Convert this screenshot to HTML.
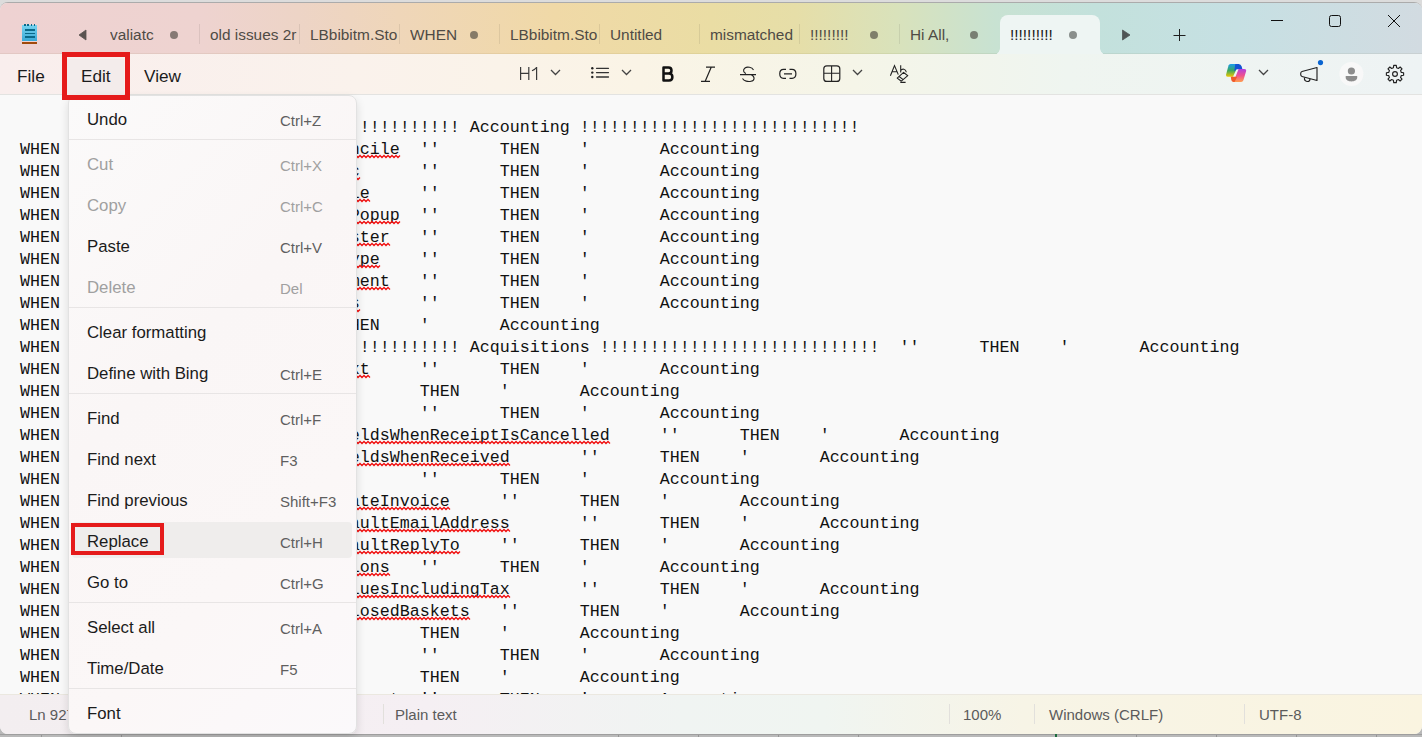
<!DOCTYPE html>
<html><head><meta charset="utf-8">
<style>
*{margin:0;padding:0;box-sizing:border-box}
html,body{width:1422px;height:737px;overflow:hidden;background:#c8c8c8;font-family:"Liberation Sans",sans-serif}
.a{position:absolute}
#desk{position:absolute;left:0;top:0;width:1422px;height:737px;background:#dcdcdc}
#win{position:absolute;left:0;top:3px;width:1422px;height:731px;border-radius:7px 7px 8px 8px;overflow:hidden;background:#f9f9f9}
#tabs{position:absolute;left:0;top:0;width:1422px;height:51px;box-shadow:inset 0 -1px 0 rgba(90,70,20,0.07);
 background:linear-gradient(90deg,#eed2d2 0%,#eed3d0 14%,#edd4c6 21%,#efd6b9 28%,#f0d9a7 39%,#eadda4 50%,#e6dea8 56%,#d9e2bb 63%,#c8e2d2 70%,#c3e1dc 77%,#c6e0e3 87%,#d2dbe1 100%)}
#menubar{position:absolute;left:0;top:51px;width:1422px;height:41px;
 background:linear-gradient(90deg,#f9eeed 0%,#faf2ec 25%,#faf4e6 45%,#f5f5e8 60%,#eff5f0 75%,#eef3f4 100%);border-bottom:1px solid #e3e3e1}
#status{position:absolute;left:0;top:691px;width:1422px;height:40px;
 background:linear-gradient(90deg,#f3eef0 0%,#f5eff3 30%,#f0f4f2 48%,#f0f5f1 58%,#f7f4e6 72%,#faf4e0 100%);border-top:1px solid #ebe8e0}
.tt{position:absolute;top:23px;font-size:15.4px;color:#4f4b45;white-space:nowrap;line-height:18px;overflow:hidden}
.sep{position:absolute;top:21px;width:1px;height:20px;background:rgba(0,0,0,0.08)}
.dot{position:absolute;top:28px;width:8px;height:8px;border-radius:50%;background:rgba(70,66,60,0.62)}
.mb{position:absolute;top:12px;font-size:17.2px;color:#1b1b1b;line-height:20px}
pre{position:absolute;left:20px;top:22px;font-family:"Liberation Mono",monospace;font-size:16.67px;line-height:22px;color:#111}
#menu{position:absolute;left:68px;top:95px;width:289px;height:639px;border-radius:8px;background:linear-gradient(135deg,#fbfafa 0%,#faf6f6 40%,#fbf7f7 70%,#fbf9fb 100%);border:1px solid #e2e2e2;box-shadow:0 4px 10px rgba(0,0,0,0.12)}
.mi{position:absolute;left:18px;font-size:16.8px;color:#1b1b1b;line-height:20px;white-space:nowrap}
.sc{position:absolute;left:211px;font-size:15px;color:#5f5f5f;line-height:18px;white-space:nowrap}
.dis{color:#a0a0a0}
.msep{position:absolute;left:0;width:287px;height:1px;background:#e8e5e5}
.st{position:absolute;top:11px;font-size:15px;color:#5b5b5b;line-height:18px;white-space:nowrap}
.ssep{position:absolute;top:9px;width:1px;height:20px;background:#e2e0dc}
</style></head><body>
<div id="desk"></div>
<div class="a" style="left:0;top:725px;width:1422px;height:12px;background:#b9b9b9;border-top:9px solid #b9b9b9"></div><div class="a" style="left:0;top:734px;width:1422px;height:1px;background:#9e9e9e"></div>
<div class="a" style="left:41px;top:735px;width:1px;height:2px;background:#969696"></div><div class="a" style="left:121px;top:735px;width:1px;height:2px;background:#969696"></div><div class="a" style="left:618px;top:735px;width:1px;height:2px;background:#969696"></div><div class="a" style="left:698px;top:735px;width:1px;height:2px;background:#969696"></div><div class="a" style="left:778px;top:735px;width:1px;height:2px;background:#969696"></div><div class="a" style="left:858px;top:735px;width:1px;height:2px;background:#969696"></div><div class="a" style="left:1136px;top:735px;width:1px;height:2px;background:#969696"></div><div class="a" style="left:1216px;top:735px;width:1px;height:2px;background:#969696"></div><div class="a" style="left:1296px;top:735px;width:1px;height:2px;background:#969696"></div><div class="a" style="left:1376px;top:735px;width:1px;height:2px;background:#969696"></div><div class="a" style="left:1055px;top:734px;width:2px;height:3px;background:#1b6b3d"></div>
<div class="a" style="left:0;top:2px;width:1422px;height:20px;border-radius:8px 8px 0 0;background:#ababab"></div>
<div id="win">
 <div id="tabs">
  <div class="tt" style="left:110px;width:52px">valiatc</div><div class="dot" style="left:170px"></div><div class="tt" style="left:210px;width:88px">old issues 2r</div><div class="tt" style="left:310px;width:88px">LBbibitm.Sto</div><div class="tt" style="left:410px;width:52px">WHEN</div><div class="dot" style="left:470px"></div><div class="tt" style="left:510px;width:88px">LBbibitm.Sto</div><div class="tt" style="left:610px;width:88px">Untitled</div><div class="tt" style="left:710px;width:88px">mismatched</div><div class="tt" style="left:810px;width:52px">!!!!!!!!!</div><div class="dot" style="left:870px"></div><div class="tt" style="left:910px;width:52px">Hi All,</div><div class="dot" style="left:970px"></div><div class="sep" style="left:199px"></div><div class="sep" style="left:299px"></div><div class="sep" style="left:399px"></div><div class="sep" style="left:499px"></div><div class="sep" style="left:599px"></div><div class="sep" style="left:699px"></div><div class="sep" style="left:799px"></div><div class="sep" style="left:899px"></div>
  <div class="a" style="left:1000px;top:12px;width:100px;height:40px;background:#eef5f3;border-radius:8px 8px 0 0"></div>
  <div class="a" style="left:993px;top:45px;width:7px;height:7px;background:radial-gradient(circle at 0 0,transparent 6.5px,#eef5f3 7.2px)"></div>
  <div class="a" style="left:1100px;top:45px;width:7px;height:7px;background:radial-gradient(circle at 100% 0,transparent 6.5px,#eef5f3 7.2px)"></div>
  <div class="tt" style="left:1010px;color:#1a1a1a;width:50px">!!!!!!!!!!</div>
  <div class="dot" style="left:1069px;background:#8a8f8c"></div>
 </div>
 <div id="menubar">
  <div class="mb" style="left:17px">File</div>
  <div class="a" style="left:67px;top:5px;width:57px;height:37px;background:#f3eceb"></div>
  <div class="mb" style="left:81px">Edit</div>
  <div class="mb" style="left:144px">View</div>
 </div>
 <div id="status">
  <div class="st" style="left:29px">Ln 927, Col 1</div>
  <div class="ssep" style="left:383px"></div>
  <div class="st" style="left:395px">Plain text</div>
  <div class="ssep" style="left:949px"></div>
  <div class="st" style="left:963px">100%</div>
  <div class="ssep" style="left:1034px"></div>
  <div class="st" style="left:1049px">Windows (CRLF)</div>
  <div class="ssep" style="left:1244px"></div>
  <div class="st" style="left:1259px">UTF-8</div>
 </div>
</div>
<div class="a" style="left:0;top:95px;width:1422px;height:599px;overflow:hidden"><pre>                                 !!!!!!!!!!! Accounting !!!!!!!!!!!!!!!!!!!!!!!!!!!!
WHEN                     xxxxxxxxncile  ''      THEN    '       Accounting
WHEN                     xxxxxxxxc      ''      THEN    '       Accounting
WHEN                     xxxxxxxxle     ''      THEN    '       Accounting
WHEN                     xxxxxxxxPopup  ''      THEN    '       Accounting
WHEN                     xxxxxxxxster   ''      THEN    '       Accounting
WHEN                     xxxxxxxxype    ''      THEN    '       Accounting
WHEN                     xxxxxxxxment   ''      THEN    '       Accounting
WHEN                     xxxxxxxxs      ''      THEN    '       Accounting
WHEN                            THEN    '       Accounting
WHEN                             !!!!!!!!!!! Acquisitions !!!!!!!!!!!!!!!!!!!!!!!!!!!!  ''      THEN    '       Accounting
WHEN                     xxxxxxxxxt     ''      THEN    '       Accounting
WHEN                                    THEN    '       Accounting
WHEN                                    ''      THEN    '       Accounting
WHEN                     xxxxxxxxeldsWhenReceiptIsCancelled     ''      THEN    '       Accounting
WHEN                     xxxxxxxxeldsWhenReceived       ''      THEN    '       Accounting
WHEN                                    ''      THEN    '       Accounting
WHEN                     xxxxxxxxateInvoice     ''      THEN    '       Accounting
WHEN                     xxxxxxxxaultEmailAddress       ''      THEN    '       Accounting
WHEN                     xxxxxxxxaultReplyTo    ''      THEN    '       Accounting
WHEN                     xxxxxxxxions   ''      THEN    '       Accounting
WHEN                     xxxxxxxxluesIncludingTax       ''      THEN    '       Accounting
WHEN                     xxxxxxxxlosedBaskets   ''      THEN    '       Accounting
WHEN                                    THEN    '       Accounting
WHEN                                    ''      THEN    '       Accounting
WHEN                                    THEN    '       Accounting
WHEN                                 t  ''      THEN    '       Accounting</pre></div>
<svg class="a" style="left:0;top:0" width="1422" height="737">
 <defs><pattern id="zz" x="0" y="0" width="4" height="3" patternUnits="userSpaceOnUse"><rect x="0" y="0" width="1" height="1" fill="#f21818"/><rect x="1" y="1" width="1" height="1" fill="#f21818"/><rect x="2" y="2" width="1" height="1" fill="#f21818"/><rect x="3" y="1" width="1" height="1" fill="#f21818"/></pattern></defs>
 <path d="M320 155.5 L322 157.5 L324 155.5 L326 157.5 L328 155.5 L330 157.5 L332 155.5 L334 157.5 L336 155.5 L338 157.5 L340 155.5 L342 157.5 L344 155.5 L346 157.5 L348 155.5 L350 157.5 L352 155.5 L354 157.5 L356 155.5 L358 157.5 L360 155.5 L362 157.5 L364 155.5 L366 157.5 L368 155.5 L370 157.5 L372 155.5 L374 157.5 L376 155.5 L378 157.5 L380 155.5 L382 157.5 L384 155.5 L386 157.5 L388 155.5 L390 157.5 L392 155.5 L394 157.5 L396 155.5 L398 157.5 L400 155.5" fill="none" stroke="#f01010" stroke-width="1.25"/><path d="M320 177.5 L322 179.5 L324 177.5 L326 179.5 L328 177.5 L330 179.5 L332 177.5 L334 179.5 L336 177.5 L338 179.5 L340 177.5 L342 179.5 L344 177.5 L346 179.5 L348 177.5 L350 179.5 L352 177.5 L354 179.5 L356 177.5 L358 179.5 L360 177.5" fill="none" stroke="#f01010" stroke-width="1.25"/><path d="M320 199.5 L322 201.5 L324 199.5 L326 201.5 L328 199.5 L330 201.5 L332 199.5 L334 201.5 L336 199.5 L338 201.5 L340 199.5 L342 201.5 L344 199.5 L346 201.5 L348 199.5 L350 201.5 L352 199.5 L354 201.5 L356 199.5 L358 201.5 L360 199.5 L362 201.5 L364 199.5 L366 201.5 L368 199.5 L370 201.5" fill="none" stroke="#f01010" stroke-width="1.25"/><path d="M320 221.5 L322 223.5 L324 221.5 L326 223.5 L328 221.5 L330 223.5 L332 221.5 L334 223.5 L336 221.5 L338 223.5 L340 221.5 L342 223.5 L344 221.5 L346 223.5 L348 221.5 L350 223.5 L352 221.5 L354 223.5 L356 221.5 L358 223.5 L360 221.5 L362 223.5 L364 221.5 L366 223.5 L368 221.5 L370 223.5 L372 221.5 L374 223.5 L376 221.5 L378 223.5 L380 221.5 L382 223.5 L384 221.5 L386 223.5 L388 221.5 L390 223.5 L392 221.5 L394 223.5 L396 221.5 L398 223.5 L400 221.5" fill="none" stroke="#f01010" stroke-width="1.25"/><path d="M320 243.5 L322 245.5 L324 243.5 L326 245.5 L328 243.5 L330 245.5 L332 243.5 L334 245.5 L336 243.5 L338 245.5 L340 243.5 L342 245.5 L344 243.5 L346 245.5 L348 243.5 L350 245.5 L352 243.5 L354 245.5 L356 243.5 L358 245.5 L360 243.5 L362 245.5 L364 243.5 L366 245.5 L368 243.5 L370 245.5 L372 243.5 L374 245.5 L376 243.5 L378 245.5 L380 243.5 L382 245.5 L384 243.5 L386 245.5 L388 243.5 L390 245.5" fill="none" stroke="#f01010" stroke-width="1.25"/><path d="M320 265.5 L322 267.5 L324 265.5 L326 267.5 L328 265.5 L330 267.5 L332 265.5 L334 267.5 L336 265.5 L338 267.5 L340 265.5 L342 267.5 L344 265.5 L346 267.5 L348 265.5 L350 267.5 L352 265.5 L354 267.5 L356 265.5 L358 267.5 L360 265.5 L362 267.5 L364 265.5 L366 267.5 L368 265.5 L370 267.5 L372 265.5 L374 267.5 L376 265.5 L378 267.5 L380 265.5" fill="none" stroke="#f01010" stroke-width="1.25"/><path d="M320 287.5 L322 289.5 L324 287.5 L326 289.5 L328 287.5 L330 289.5 L332 287.5 L334 289.5 L336 287.5 L338 289.5 L340 287.5 L342 289.5 L344 287.5 L346 289.5 L348 287.5 L350 289.5 L352 287.5 L354 289.5 L356 287.5 L358 289.5 L360 287.5 L362 289.5 L364 287.5 L366 289.5 L368 287.5 L370 289.5 L372 287.5 L374 289.5 L376 287.5 L378 289.5 L380 287.5 L382 289.5 L384 287.5 L386 289.5 L388 287.5 L390 289.5" fill="none" stroke="#f01010" stroke-width="1.25"/><path d="M320 309.5 L322 311.5 L324 309.5 L326 311.5 L328 309.5 L330 311.5 L332 309.5 L334 311.5 L336 309.5 L338 311.5 L340 309.5 L342 311.5 L344 309.5 L346 311.5 L348 309.5 L350 311.5 L352 309.5 L354 311.5 L356 309.5 L358 311.5 L360 309.5" fill="none" stroke="#f01010" stroke-width="1.25"/><path d="M320 375.5 L322 377.5 L324 375.5 L326 377.5 L328 375.5 L330 377.5 L332 375.5 L334 377.5 L336 375.5 L338 377.5 L340 375.5 L342 377.5 L344 375.5 L346 377.5 L348 375.5 L350 377.5 L352 375.5 L354 377.5 L356 375.5 L358 377.5 L360 375.5 L362 377.5 L364 375.5 L366 377.5 L368 375.5 L370 377.5" fill="none" stroke="#f01010" stroke-width="1.25"/><path d="M320 441.5 L322 443.5 L324 441.5 L326 443.5 L328 441.5 L330 443.5 L332 441.5 L334 443.5 L336 441.5 L338 443.5 L340 441.5 L342 443.5 L344 441.5 L346 443.5 L348 441.5 L350 443.5 L352 441.5 L354 443.5 L356 441.5 L358 443.5 L360 441.5 L362 443.5 L364 441.5 L366 443.5 L368 441.5 L370 443.5 L372 441.5 L374 443.5 L376 441.5 L378 443.5 L380 441.5 L382 443.5 L384 441.5 L386 443.5 L388 441.5 L390 443.5 L392 441.5 L394 443.5 L396 441.5 L398 443.5 L400 441.5 L402 443.5 L404 441.5 L406 443.5 L408 441.5 L410 443.5 L412 441.5 L414 443.5 L416 441.5 L418 443.5 L420 441.5 L422 443.5 L424 441.5 L426 443.5 L428 441.5 L430 443.5 L432 441.5 L434 443.5 L436 441.5 L438 443.5 L440 441.5 L442 443.5 L444 441.5 L446 443.5 L448 441.5 L450 443.5 L452 441.5 L454 443.5 L456 441.5 L458 443.5 L460 441.5 L462 443.5 L464 441.5 L466 443.5 L468 441.5 L470 443.5 L472 441.5 L474 443.5 L476 441.5 L478 443.5 L480 441.5 L482 443.5 L484 441.5 L486 443.5 L488 441.5 L490 443.5 L492 441.5 L494 443.5 L496 441.5 L498 443.5 L500 441.5 L502 443.5 L504 441.5 L506 443.5 L508 441.5 L510 443.5 L512 441.5 L514 443.5 L516 441.5 L518 443.5 L520 441.5 L522 443.5 L524 441.5 L526 443.5 L528 441.5 L530 443.5 L532 441.5 L534 443.5 L536 441.5 L538 443.5 L540 441.5 L542 443.5 L544 441.5 L546 443.5 L548 441.5 L550 443.5 L552 441.5 L554 443.5 L556 441.5 L558 443.5 L560 441.5 L562 443.5 L564 441.5 L566 443.5 L568 441.5 L570 443.5 L572 441.5 L574 443.5 L576 441.5 L578 443.5 L580 441.5 L582 443.5 L584 441.5 L586 443.5 L588 441.5 L590 443.5 L592 441.5 L594 443.5 L596 441.5 L598 443.5 L600 441.5 L602 443.5 L604 441.5 L606 443.5 L608 441.5 L610 443.5" fill="none" stroke="#f01010" stroke-width="1.25"/><path d="M320 463.5 L322 465.5 L324 463.5 L326 465.5 L328 463.5 L330 465.5 L332 463.5 L334 465.5 L336 463.5 L338 465.5 L340 463.5 L342 465.5 L344 463.5 L346 465.5 L348 463.5 L350 465.5 L352 463.5 L354 465.5 L356 463.5 L358 465.5 L360 463.5 L362 465.5 L364 463.5 L366 465.5 L368 463.5 L370 465.5 L372 463.5 L374 465.5 L376 463.5 L378 465.5 L380 463.5 L382 465.5 L384 463.5 L386 465.5 L388 463.5 L390 465.5 L392 463.5 L394 465.5 L396 463.5 L398 465.5 L400 463.5 L402 465.5 L404 463.5 L406 465.5 L408 463.5 L410 465.5 L412 463.5 L414 465.5 L416 463.5 L418 465.5 L420 463.5 L422 465.5 L424 463.5 L426 465.5 L428 463.5 L430 465.5 L432 463.5 L434 465.5 L436 463.5 L438 465.5 L440 463.5 L442 465.5 L444 463.5 L446 465.5 L448 463.5 L450 465.5 L452 463.5 L454 465.5 L456 463.5 L458 465.5 L460 463.5 L462 465.5 L464 463.5 L466 465.5 L468 463.5 L470 465.5 L472 463.5 L474 465.5 L476 463.5 L478 465.5 L480 463.5 L482 465.5 L484 463.5 L486 465.5 L488 463.5 L490 465.5 L492 463.5 L494 465.5 L496 463.5 L498 465.5 L500 463.5 L502 465.5 L504 463.5 L506 465.5 L508 463.5 L510 465.5" fill="none" stroke="#f01010" stroke-width="1.25"/><path d="M320 507.5 L322 509.5 L324 507.5 L326 509.5 L328 507.5 L330 509.5 L332 507.5 L334 509.5 L336 507.5 L338 509.5 L340 507.5 L342 509.5 L344 507.5 L346 509.5 L348 507.5 L350 509.5 L352 507.5 L354 509.5 L356 507.5 L358 509.5 L360 507.5 L362 509.5 L364 507.5 L366 509.5 L368 507.5 L370 509.5 L372 507.5 L374 509.5 L376 507.5 L378 509.5 L380 507.5 L382 509.5 L384 507.5 L386 509.5 L388 507.5 L390 509.5 L392 507.5 L394 509.5 L396 507.5 L398 509.5 L400 507.5 L402 509.5 L404 507.5 L406 509.5 L408 507.5 L410 509.5 L412 507.5 L414 509.5 L416 507.5 L418 509.5 L420 507.5 L422 509.5 L424 507.5 L426 509.5 L428 507.5 L430 509.5 L432 507.5 L434 509.5 L436 507.5 L438 509.5 L440 507.5 L442 509.5 L444 507.5 L446 509.5 L448 507.5 L450 509.5" fill="none" stroke="#f01010" stroke-width="1.25"/><path d="M320 529.5 L322 531.5 L324 529.5 L326 531.5 L328 529.5 L330 531.5 L332 529.5 L334 531.5 L336 529.5 L338 531.5 L340 529.5 L342 531.5 L344 529.5 L346 531.5 L348 529.5 L350 531.5 L352 529.5 L354 531.5 L356 529.5 L358 531.5 L360 529.5 L362 531.5 L364 529.5 L366 531.5 L368 529.5 L370 531.5 L372 529.5 L374 531.5 L376 529.5 L378 531.5 L380 529.5 L382 531.5 L384 529.5 L386 531.5 L388 529.5 L390 531.5 L392 529.5 L394 531.5 L396 529.5 L398 531.5 L400 529.5 L402 531.5 L404 529.5 L406 531.5 L408 529.5 L410 531.5 L412 529.5 L414 531.5 L416 529.5 L418 531.5 L420 529.5 L422 531.5 L424 529.5 L426 531.5 L428 529.5 L430 531.5 L432 529.5 L434 531.5 L436 529.5 L438 531.5 L440 529.5 L442 531.5 L444 529.5 L446 531.5 L448 529.5 L450 531.5 L452 529.5 L454 531.5 L456 529.5 L458 531.5 L460 529.5 L462 531.5 L464 529.5 L466 531.5 L468 529.5 L470 531.5 L472 529.5 L474 531.5 L476 529.5 L478 531.5 L480 529.5 L482 531.5 L484 529.5 L486 531.5 L488 529.5 L490 531.5 L492 529.5 L494 531.5 L496 529.5 L498 531.5 L500 529.5 L502 531.5 L504 529.5 L506 531.5 L508 529.5 L510 531.5" fill="none" stroke="#f01010" stroke-width="1.25"/><path d="M320 551.5 L322 553.5 L324 551.5 L326 553.5 L328 551.5 L330 553.5 L332 551.5 L334 553.5 L336 551.5 L338 553.5 L340 551.5 L342 553.5 L344 551.5 L346 553.5 L348 551.5 L350 553.5 L352 551.5 L354 553.5 L356 551.5 L358 553.5 L360 551.5 L362 553.5 L364 551.5 L366 553.5 L368 551.5 L370 553.5 L372 551.5 L374 553.5 L376 551.5 L378 553.5 L380 551.5 L382 553.5 L384 551.5 L386 553.5 L388 551.5 L390 553.5 L392 551.5 L394 553.5 L396 551.5 L398 553.5 L400 551.5 L402 553.5 L404 551.5 L406 553.5 L408 551.5 L410 553.5 L412 551.5 L414 553.5 L416 551.5 L418 553.5 L420 551.5 L422 553.5 L424 551.5 L426 553.5 L428 551.5 L430 553.5 L432 551.5 L434 553.5 L436 551.5 L438 553.5 L440 551.5 L442 553.5 L444 551.5 L446 553.5 L448 551.5 L450 553.5 L452 551.5 L454 553.5 L456 551.5 L458 553.5 L460 551.5" fill="none" stroke="#f01010" stroke-width="1.25"/><path d="M320 573.5 L322 575.5 L324 573.5 L326 575.5 L328 573.5 L330 575.5 L332 573.5 L334 575.5 L336 573.5 L338 575.5 L340 573.5 L342 575.5 L344 573.5 L346 575.5 L348 573.5 L350 575.5 L352 573.5 L354 575.5 L356 573.5 L358 575.5 L360 573.5 L362 575.5 L364 573.5 L366 575.5 L368 573.5 L370 575.5 L372 573.5 L374 575.5 L376 573.5 L378 575.5 L380 573.5 L382 575.5 L384 573.5 L386 575.5 L388 573.5 L390 575.5" fill="none" stroke="#f01010" stroke-width="1.25"/><path d="M320 595.5 L322 597.5 L324 595.5 L326 597.5 L328 595.5 L330 597.5 L332 595.5 L334 597.5 L336 595.5 L338 597.5 L340 595.5 L342 597.5 L344 595.5 L346 597.5 L348 595.5 L350 597.5 L352 595.5 L354 597.5 L356 595.5 L358 597.5 L360 595.5 L362 597.5 L364 595.5 L366 597.5 L368 595.5 L370 597.5 L372 595.5 L374 597.5 L376 595.5 L378 597.5 L380 595.5 L382 597.5 L384 595.5 L386 597.5 L388 595.5 L390 597.5 L392 595.5 L394 597.5 L396 595.5 L398 597.5 L400 595.5 L402 597.5 L404 595.5 L406 597.5 L408 595.5 L410 597.5 L412 595.5 L414 597.5 L416 595.5 L418 597.5 L420 595.5 L422 597.5 L424 595.5 L426 597.5 L428 595.5 L430 597.5 L432 595.5 L434 597.5 L436 595.5 L438 597.5 L440 595.5 L442 597.5 L444 595.5 L446 597.5 L448 595.5 L450 597.5 L452 595.5 L454 597.5 L456 595.5 L458 597.5 L460 595.5 L462 597.5 L464 595.5 L466 597.5 L468 595.5 L470 597.5 L472 595.5 L474 597.5 L476 595.5 L478 597.5 L480 595.5 L482 597.5 L484 595.5 L486 597.5 L488 595.5 L490 597.5 L492 595.5 L494 597.5 L496 595.5 L498 597.5 L500 595.5 L502 597.5 L504 595.5 L506 597.5 L508 595.5 L510 597.5" fill="none" stroke="#f01010" stroke-width="1.25"/><path d="M320 617.5 L322 619.5 L324 617.5 L326 619.5 L328 617.5 L330 619.5 L332 617.5 L334 619.5 L336 617.5 L338 619.5 L340 617.5 L342 619.5 L344 617.5 L346 619.5 L348 617.5 L350 619.5 L352 617.5 L354 619.5 L356 617.5 L358 619.5 L360 617.5 L362 619.5 L364 617.5 L366 619.5 L368 617.5 L370 619.5 L372 617.5 L374 619.5 L376 617.5 L378 619.5 L380 617.5 L382 619.5 L384 617.5 L386 619.5 L388 617.5 L390 619.5 L392 617.5 L394 619.5 L396 617.5 L398 619.5 L400 617.5 L402 619.5 L404 617.5 L406 619.5 L408 617.5 L410 619.5 L412 617.5 L414 619.5 L416 617.5 L418 619.5 L420 617.5 L422 619.5 L424 617.5 L426 619.5 L428 617.5 L430 619.5 L432 617.5 L434 619.5 L436 617.5 L438 619.5 L440 617.5 L442 619.5 L444 617.5 L446 619.5 L448 617.5 L450 619.5 L452 617.5 L454 619.5 L456 617.5 L458 619.5 L460 617.5 L462 619.5 L464 617.5 L466 619.5 L468 617.5 L470 619.5" fill="none" stroke="#f01010" stroke-width="1.25"/>
</svg>
<svg class="a" style="left:0;top:0" width="1422" height="100" viewBox="0 0 1422 100">
 <defs>
  <linearGradient id="np" x1="0" y1="0" x2="0" y2="1"><stop offset="0" stop-color="#78d4f0"/><stop offset="1" stop-color="#3aa9d6"/></linearGradient>
  <linearGradient id="cpl" x1="0" y1="0" x2="0" y2="1"><stop offset="0" stop-color="#1a9cf0"/><stop offset="0.5" stop-color="#3aa860"/><stop offset="1" stop-color="#f0c800"/></linearGradient>
  <linearGradient id="cpr" x1="0" y1="0" x2="0" y2="1"><stop offset="0" stop-color="#b040e0"/><stop offset="0.5" stop-color="#ee5090"/><stop offset="1" stop-color="#ffa050"/></linearGradient>
 </defs>
 <!-- notepad icon -->
 <rect x="22" y="25" width="15" height="16" fill="url(#np)"/>
 <rect x="24" y="24" width="2" height="2" fill="#0b6a8a"/><rect x="27" y="24" width="2" height="2" fill="#0b6a8a"/>
 <rect x="31" y="24" width="1" height="2" fill="#0b6a8a"/><rect x="34" y="24" width="1" height="2" fill="#0b6a8a"/>
 <rect x="25" y="29" width="10" height="2" fill="#0b6a8a"/><rect x="25" y="33" width="10" height="1" fill="#0b6a8a"/><rect x="25" y="36" width="10" height="2" fill="#0b6a8a"/>
 <rect x="22" y="42" width="15" height="2" fill="#a04a0c"/>
 <!-- arrows -->
 <path d="M79 35 L86 30 L86 40 Z" fill="#5a5350" stroke="#5a5350" stroke-width="0.8" stroke-linejoin="round"/>
 <path d="M1130 35 L1122.5 30 L1122.5 40 Z" fill="#4f5555" stroke="#4f5555" stroke-width="0.8" stroke-linejoin="round"/>
 <path d="M1173.5 35.5 H1185.5 M1179.5 29 V41" stroke="#1e1e1e" stroke-width="1"/>
 <!-- window controls -->
 <path d="M1271 20.5 H1283" stroke="#111" stroke-width="1"/>
 <rect x="1329.5" y="15.5" width="11" height="11" rx="2" fill="none" stroke="#111" stroke-width="1"/>
 <path d="M1388 15 L1400 27 M1400 15 L1388 27" stroke="#111" stroke-width="1"/>
 <!-- toolbar -->
 <path d="M520.6 67 V80 M528.8 67 V80 M520.6 73.3 H528.8 M536.6 67 V80 M536.6 67.2 C535.5 69 533.8 70 532 70.8" fill="none" stroke="#3a3a3a" stroke-width="1.2"/>
 <path d="M551 70 L555.5 74.5 L560 70" fill="none" stroke="#444" stroke-width="1.3"/>
 <circle cx="592.3" cy="68.3" r="1.2" fill="#222"/><circle cx="592.3" cy="72.6" r="1.2" fill="#222"/><circle cx="592.3" cy="77" r="1.2" fill="#222"/>
 <path d="M596.5 68.3 H608.5 M596.5 72.6 H608.5 M596.5 77 H608.5" stroke="#333" stroke-width="1.3" stroke-linecap="round"/>
 <path d="M622 70 L626.5 74.5 L631 70" fill="none" stroke="#444" stroke-width="1.3"/>
 <path d="M663.5 67.5 H668.5 C672.5 67.5 672.5 73.6 668.5 73.6 H663.5 Z M663.5 73.6 H669 C673.5 73.6 673.5 80.6 669 80.6 H663.5 Z" fill="none" stroke="#111" stroke-width="2.5" stroke-linejoin="round"/>
 <path d="M706 67.2 H715 M701 81.3 H710 M711.2 67.2 L705.2 81.3" stroke="#222" stroke-width="1.2"/>
 <path d="M753.5 70 C752 67 747 66.5 745 68 C742.5 70 743.5 72.8 746 73.5 M751.5 75 C755 76.5 755 80.5 751 81.3 C748 82 744 81 742.5 78.5 M740 74.6 H756" fill="none" stroke="#222" stroke-width="1.1"/>
 <path d="M786 69.3 H783.5 C778.5 69.3 778.5 78.3 783.5 78.3 H786 M789.5 69.3 H792 C797.2 69.3 797.2 78.3 792 78.3 H789.5 M784 73.8 H792" fill="none" stroke="#222" stroke-width="1.2"/>
 <rect x="823.8" y="65.8" width="16" height="15.6" rx="3" fill="none" stroke="#222" stroke-width="1.2"/>
 <path d="M831.6 66 V81 M824 73.3 H839.5" stroke="#222" stroke-width="1.1"/>
 <path d="M853 70 L857.5 74.5 L862 70" fill="none" stroke="#444" stroke-width="1.3"/>
 <path d="M890.4 75.8 L894.5 65.6 L898.3 74.6 M892.3 71.8 H897" fill="none" stroke="#222" stroke-width="1.1"/>
 <path d="M900.7 65.3 V72.6 M900.8 70.6 C902 68.4 905.9 68.5 906.3 72.3" fill="none" stroke="#222" stroke-width="1.1"/>
 <path d="M903.6 72.4 L907.8 75.7 L901.3 81.2 L897.2 78.1 Z" fill="#f2f5ec" stroke="#222" stroke-width="1.1" stroke-linejoin="round"/>
 <path d="M899.1 76.5 L903.2 79.6 M900.3 82.4 H905.6" fill="none" stroke="#222" stroke-width="1.1"/>
 <!-- copilot -->
 <path d="M1230.6 63.9 H1238.8 L1233 76.8 H1227.6 Q1225.6 76.8 1226.1 74.6 L1228.5 65.6 Q1229 63.9 1230.6 63.9 Z" fill="url(#cpl)"/>
 <path d="M1235.3 63.9 H1238.6 Q1240.9 63.9 1241.7 66.6 L1242.4 69.2 H1236.6 L1234.2 71.5 Z" fill="#1454d4"/>
 <path d="M1238.6 68.9 H1244.2 Q1246.6 68.9 1246.1 71.2 L1243.4 80.2 Q1242.9 82 1241.1 82 H1233.4 Z" fill="url(#cpr)"/>
 <path d="M1230.8 76.8 H1237.2 L1234.6 82 H1233.6 Q1231.8 82 1231.3 80 Z" fill="#f05a2a"/>
 <path d="M1259 70 L1263.5 74.5 L1268 70" fill="none" stroke="#444" stroke-width="1.3"/>
 <!-- megaphone -->
 <path d="M1317 67.5 V80.5 L1302 76.5 C1300.2 76 1300.2 72 1302 71.5 Z" fill="none" stroke="#222" stroke-width="1.15" stroke-linejoin="round"/>
 <path d="M1304.5 77.5 C1304 80.5 1306 81.5 1307.5 81.5 C1309 81.5 1310 80.5 1310 79" fill="none" stroke="#222" stroke-width="1.2"/>
 <circle cx="1320.5" cy="62.6" r="2.6" fill="#0a64d0"/>
 <!-- avatar -->
 <circle cx="1351.4" cy="74.1" r="12" fill="#f8f8f8"/>
 <circle cx="1351.4" cy="71" r="3.6" fill="#8c8c8c"/>
 <path d="M1345.7 76 H1357.2 V77.5 C1357.2 80 1354.5 81.4 1351.4 81.4 C1348.3 81.4 1345.7 80 1345.7 77.5 Z" fill="#8c8c8c"/>
 <!-- gear -->
 <g transform="translate(1395 74)" fill="none" stroke="#222" stroke-width="1.15" stroke-linejoin="round">
  <path d="M-1.57 -6.31 L-1.29 -8.60 L1.29 -8.60 L1.57 -6.31 L3.35 -5.57 L5.17 -7.00 L7.00 -5.17 L5.57 -3.35 L6.31 -1.57 L8.60 -1.29 L8.60 1.29 L6.31 1.57 L5.57 3.35 L7.00 5.17 L5.17 7.00 L3.35 5.57 L1.57 6.31 L1.29 8.60 L-1.29 8.60 L-1.57 6.31 L-3.35 5.57 L-5.17 7.00 L-7.00 5.17 L-5.57 3.35 L-6.31 1.57 L-8.60 1.29 L-8.60 -1.29 L-6.31 -1.57 L-5.57 -3.35 L-7.00 -5.17 L-5.17 -7.00 L-3.35 -5.57 Z"/>
  <circle r="2.4"/>
 </g>
</svg>

<div id="menu">
 <div class="a" style="left:3px;top:426px;width:280px;height:36px;border-radius:4px;background:#efedec"></div>
 <div class="mi" style="top:14px">Undo</div><div class="sc" style="top:16px">Ctrl+Z</div><div class="mi dis" style="top:59px">Cut</div><div class="sc dis" style="top:61px">Ctrl+X</div><div class="mi dis" style="top:100px">Copy</div><div class="sc dis" style="top:102px">Ctrl+C</div><div class="mi" style="top:141px">Paste</div><div class="sc" style="top:143px">Ctrl+V</div><div class="mi dis" style="top:182px">Delete</div><div class="sc dis" style="top:184px">Del</div><div class="mi" style="top:227px">Clear formatting</div><div class="mi" style="top:268px">Define with Bing</div><div class="sc" style="top:270px">Ctrl+E</div><div class="mi" style="top:313px">Find</div><div class="sc" style="top:315px">Ctrl+F</div><div class="mi" style="top:354px">Find next</div><div class="sc" style="top:356px">F3</div><div class="mi" style="top:395px">Find previous</div><div class="sc" style="top:397px">Shift+F3</div><div class="mi" style="top:436px">Replace</div><div class="sc" style="top:438px">Ctrl+H</div><div class="mi" style="top:477px">Go to</div><div class="sc" style="top:479px">Ctrl+G</div><div class="mi" style="top:522px">Select all</div><div class="sc" style="top:524px">Ctrl+A</div><div class="mi" style="top:563px">Time/Date</div><div class="sc" style="top:565px">F5</div><div class="mi" style="top:608px">Font</div><div class="msep" style="top:43px"></div><div class="msep" style="top:211px"></div><div class="msep" style="top:297px"></div><div class="msep" style="top:506px"></div><div class="msep" style="top:592px"></div>
</div>
<div class="a" style="left:62px;top:52px;width:68px;height:48px;border:5px solid #e51b1b"></div>
<div class="a" style="left:71px;top:523px;width:93px;height:32px;border:4.5px solid #e51b1b"></div>
</body></html>
